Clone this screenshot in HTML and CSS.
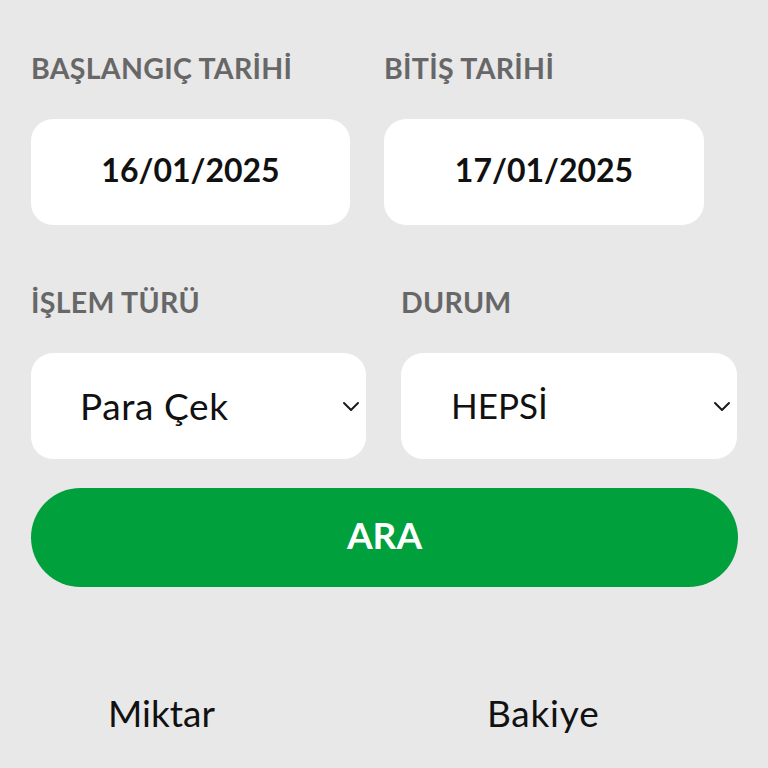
FILE: index.html
```html
<!DOCTYPE html>
<html lang="tr">
<head>
<meta charset="utf-8">
<link rel="stylesheet" href="styles.css">
</head>
<body>
<div class="page">
  <div class="row dates">
    <div class="field">
      <div class="label">BAŞLANGIÇ TARİHİ</div>
      <div class="datebox">16/01/2025</div>
    </div>
    <div class="field">
      <div class="label">BİTİŞ TARİHİ</div>
      <div class="datebox">17/01/2025</div>
    </div>
  </div>
  <div class="row selects">
    <div class="field">
      <div class="label">İŞLEM TÜRÜ</div>
      <div class="select">
        <span class="value value-wide">Para Çek</span>
        <svg class="chev" width="18" height="12" viewBox="0 0 18 12"><path d="M2 3 L9 10 L16 3" fill="none" stroke="#1a1a1a" stroke-width="2" stroke-linecap="round" stroke-linejoin="round"/></svg>
      </div>
    </div>
    <div class="field">
      <div class="label">DURUM</div>
      <div class="select">
        <span class="value">HEPSİ</span>
        <svg class="chev" width="18" height="12" viewBox="0 0 18 12"><path d="M2 3 L9 10 L16 3" fill="none" stroke="#1a1a1a" stroke-width="2" stroke-linecap="round" stroke-linejoin="round"/></svg>
      </div>
    </div>
  </div>
  <button class="search">ARA</button>
  <div class="table-head">
    <span class="col col-amount">Miktar</span>
    <span class="col col-balance">Bakiye</span>
  </div>
</div>
</body>
</html>
```

FILE: styles.css
```css
html, body {
  margin: 0;
  padding: 0;
  background: #e8e8e8;
}
body {
  font-family: Lato, "Noto Sans", sans-serif;
  color: #111;
  width: 768px;
  height: 768px;
  overflow: hidden;
}
.page {
  padding: 55px 31px 0 31px;
}
.row {
  display: grid;
}
.dates {
  grid-template-columns: 319px 320px;
  column-gap: 34px;
}
.selects {
  margin-top: 64px;
  grid-template-columns: 335px 336px;
  column-gap: 35px;
}
.field {
  display: flex;
  flex-direction: column;
}
.label {
  font-weight: 700;
  font-size: 28.5px;
  line-height: 27px;
  color: #676767;
  padding-left: 0;
  letter-spacing: 0.3px;
}
.dates .label { margin-bottom: 37px; }
.selects .label { margin-bottom: 37px; }
.datebox {
  height: 106px;
  background: #fff;
  border-radius: 22px;
  display: flex;
  align-items: center;
  justify-content: center;
  font-weight: 700;
  font-size: 32px;
  padding-bottom: 5px;
  box-sizing: border-box;
  color: #111;
}
.select {
  height: 106px;
  background: #fff;
  border-radius: 22px;
  display: flex;
  align-items: center;
  justify-content: space-between;
  padding: 0 6px 0 49px;
  box-sizing: border-box;
}
.selects .field:nth-child(2) .select { padding-left: 50px; }
.value {
  font-size: 35px;
  font-weight: 400;
  color: #111;
  padding-bottom: 2px;
}
.value-wide {
  font-size: 37px;
  letter-spacing: 0.6px;
}
.chev {
  display: block;
}
.search {
  display: block;
  width: 707px;
  height: 99px;
  margin-top: 29px;
  border: none;
  border-radius: 50px;
  background: #00a03c;
  color: #fff;
  font-family: Lato, "Noto Sans", sans-serif;
  font-weight: 700;
  font-size: 37px;
  padding: 0 0 6px 0;
}
.table-head {
  display: flex;
  margin-top: 103px;
  padding-left: 77px;
}
.col {
  font-size: 37px;
  font-weight: 400;
  color: #111;
}
.col-balance {
  margin-left: 272px;
  letter-spacing: 0.8px;
}
```
